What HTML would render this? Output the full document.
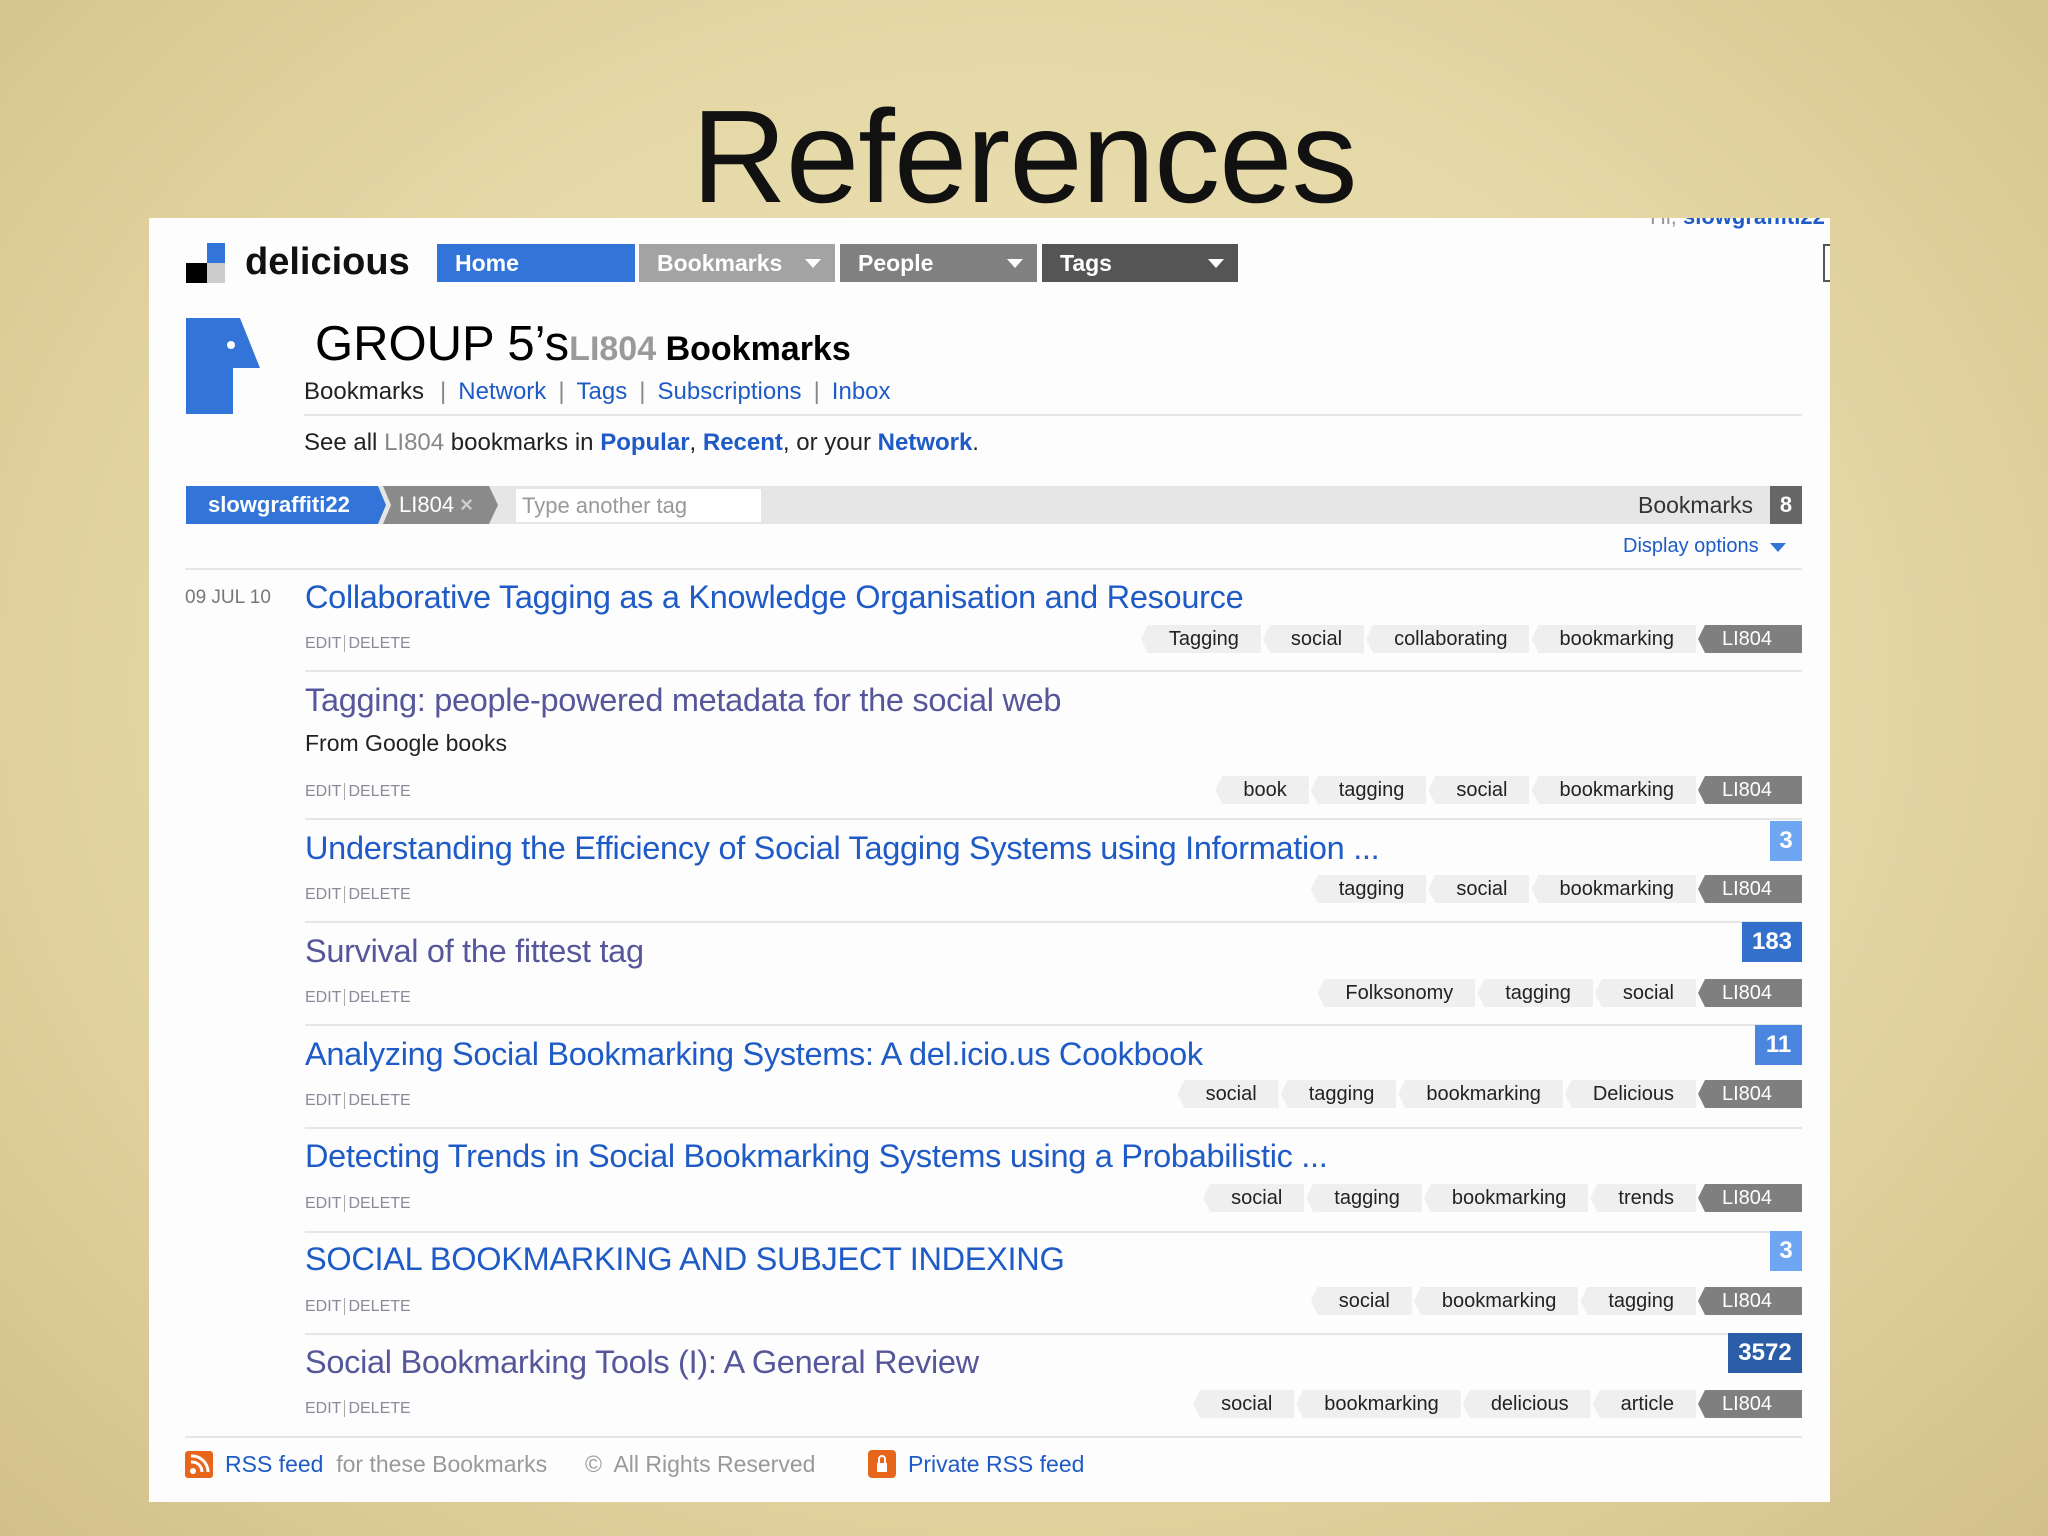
<!DOCTYPE html>
<html><head><meta charset="utf-8">
<style>
*{margin:0;padding:0;box-sizing:border-box}
html,body{width:2048px;height:1536px;overflow:hidden}
body{position:relative;font-family:"Liberation Sans",Arial,sans-serif;
background:radial-gradient(ellipse at 50% 45%,#efe5bd 0%,#e5d8a6 55%,#d3c08a 100%);}
.a{position:absolute;white-space:nowrap}
#title{left:0;width:2048px;text-align:center;top:82px;font-size:132px;line-height:150px;color:#111;letter-spacing:-1px}
#panel{left:149px;top:218px;width:1681px;height:1284px;background:#fdfdfd}
.tab{position:absolute;top:244px;height:38px;color:#fff;font-weight:bold;font-size:23px;line-height:38px;padding-left:18px}
.tri{position:absolute;right:14px;top:15px;width:0;height:0;border-left:8px solid transparent;border-right:8px solid transparent;border-top:9px solid #fff}
.blue{color:#1f5bc6}
.vis{color:#56579a}
.t{font-size:32.5px;line-height:36px;letter-spacing:-0.3px}
.ed{font-size:16px;color:#8a8a99;line-height:20px}
.ed b{font-weight:normal;border-left:1px solid #aaa;margin:0 3px;}
.tags{position:absolute;right:246px;display:flex;height:28px}
.tags span{display:block;background:#efefef;color:#222;font-size:20px;line-height:28px;padding:0 22px 0 28px;margin-left:2px;clip-path:polygon(7px 0,100% 0,100% 100%,7px 100%,0 50%)}
.tags span.l{background:#7f7f7f;color:#fff;width:104px;padding:0 0 0 24px}
.hr{position:absolute;height:2px;background:#e6e6e6}
.cnt{position:absolute;right:246px;height:40px;color:#fff;font-weight:bold;font-size:24px;line-height:40px;text-align:center}
.sep{color:#888;margin:0 12px}
</style></head><body>
<div class="a" id="title">References</div>
<div class="a" id="panel"></div>
<div class="a" style="left:1650px;top:218px;width:180px;height:14px;overflow:hidden"><div style="margin-top:-14px;font-size:22px;font-weight:bold;color:#1f5bc6"><span style="color:#999;font-weight:normal">Hi, </span>slowgraffiti22</div></div>
<div class="a" style="left:1823px;top:244px;width:7px;height:38px;border:2px solid #555;border-right:none"></div>

<div class="a" style="left:186px;top:263px;width:21px;height:20px;background:#000"></div>
<div class="a" style="left:207px;top:243px;width:18px;height:20px;background:#3274d8"></div>
<div class="a" style="left:207px;top:263px;width:18px;height:20px;background:#ccc"></div>
<div class="a" style="left:245px;top:240px;font-size:38px;font-weight:bold;color:#111;line-height:44px;letter-spacing:0px">delicious</div>

<div class="tab" style="left:437px;width:198px;background:#3274d8">Home</div>
<div class="tab" style="left:639px;width:196px;background:#a3a3a3">Bookmarks<i class="tri"></i></div>
<div class="tab" style="left:840px;width:197px;background:#808080">People<i class="tri"></i></div>
<div class="tab" style="left:1042px;width:196px;background:#555">Tags<i class="tri"></i></div>

<svg class="a" style="left:186px;top:318px" width="74" height="96"><polygon points="0,0 54,0 74,50 47,50 47,96 0,96" fill="#3274d8"/><circle cx="45" cy="27" r="4" fill="#fff"/></svg>

<div class="a" style="left:315px;top:316px;font-size:49px;line-height:56px;color:#000">GROUP 5’s<span style="font-size:34px;font-weight:bold;color:#9a9a9a">LI804 </span><span style="font-size:34px;font-weight:bold">Bookmarks</span></div>
<div class="a" style="left:304px;top:377px;font-size:24px;line-height:30px;color:#222">Bookmarks<span class="sep" style="margin-left:16px">|</span><span class="blue">Network</span><span class="sep">|</span><span class="blue">Tags</span><span class="sep">|</span><span class="blue">Subscriptions</span><span class="sep">|</span><span class="blue">Inbox</span></div>
<div class="hr" style="left:304px;top:414px;width:1498px"></div>
<div class="a" style="left:304px;top:428px;font-size:24px;line-height:30px;color:#222">See all <span style="color:#888">LI804</span> bookmarks in <b class="blue">Popular</b>, <b class="blue">Recent</b>, or your <b class="blue">Network</b>.</div>

<div class="a" style="left:186px;top:486px;width:1616px;height:38px;background:#e6e6e6"></div>
<div class="a" style="left:186px;top:486px;width:200px;height:38px;background:#3274d8;clip-path:polygon(0 0,192px 0,200px 50%,192px 100%,0 100%);color:#fff;font-weight:bold;font-size:22px;line-height:38px;padding-left:22px">slowgraffiti22</div>
<div class="a" style="left:383px;top:486px;width:115px;height:38px;background:#8a8a8a;clip-path:polygon(0 0,106px 0,115px 50%,106px 100%,0 100%,8px 50%);color:#fff;font-size:22px;line-height:38px;padding-left:16px">LI804 <span style="color:#ccc;font-weight:bold">×</span></div>
<div class="a" style="left:516px;top:489px;width:245px;height:33px;background:#fff;color:#999;font-size:22px;line-height:33px;padding-left:6px">Type another tag</div>
<div class="a" style="left:1638px;top:486px;font-size:23px;line-height:38px;color:#333">Bookmarks</div>
<div class="a" style="left:1770px;top:486px;width:32px;height:38px;background:#666;color:#fff;font-size:22px;font-weight:bold;line-height:38px;text-align:center">8</div>
<div class="a blue" style="left:1623px;top:533px;font-size:20px;line-height:26px">Display options <span style="display:inline-block;width:0;height:0;border-left:8px solid transparent;border-right:8px solid transparent;border-top:9px solid #3274d8;margin-left:6px"></span></div>
<div class="hr" style="left:185px;top:568px;width:1617px"></div>

<div class="a" style="left:185px;top:587px;font-size:19px;color:#777;line-height:22px">09 JUL 10</div>
<div class="a t blue" style="left:305px;top:579px">Collaborative Tagging as a Knowledge Organisation and Resource</div>
<div class="a ed" style="left:305px;top:634px">EDIT<b></b>DELETE</div>
<div class="tags" style="top:625px"><span>Tagging</span><span>social</span><span>collaborating</span><span>bookmarking</span><span class="l">LI804</span></div>
<div class="hr" style="left:305px;top:670px;width:1497px"></div>

<div class="a t vis" style="left:305px;top:682px">Tagging: people-powered metadata for the social web</div>
<div class="a" style="left:305px;top:730px;font-size:23px;color:#222;line-height:26px">From Google books</div>
<div class="a ed" style="left:305px;top:782px">EDIT<b></b>DELETE</div>
<div class="tags" style="top:776px"><span>book</span><span>tagging</span><span>social</span><span>bookmarking</span><span class="l">LI804</span></div>
<div class="hr" style="left:305px;top:818px;width:1497px"></div>

<div class="cnt" style="top:821px;width:32px;background:#6fa6f2">3</div>
<div class="a t blue" style="left:305px;top:830px">Understanding the Efficiency of Social Tagging Systems using Information ...</div>
<div class="a ed" style="left:305px;top:885px">EDIT<b></b>DELETE</div>
<div class="tags" style="top:875px"><span>tagging</span><span>social</span><span>bookmarking</span><span class="l">LI804</span></div>
<div class="hr" style="left:305px;top:921px;width:1497px"></div>

<div class="cnt" style="top:922px;width:60px;background:#3370cc">183</div>
<div class="a t vis" style="left:305px;top:933px">Survival of the fittest tag</div>
<div class="a ed" style="left:305px;top:988px">EDIT<b></b>DELETE</div>
<div class="tags" style="top:979px"><span>Folksonomy</span><span>tagging</span><span>social</span><span class="l">LI804</span></div>
<div class="hr" style="left:305px;top:1024px;width:1497px"></div>

<div class="cnt" style="top:1025px;width:47px;background:#4a86e0">11</div>
<div class="a t blue" style="left:305px;top:1036px">Analyzing Social Bookmarking Systems: A del.icio.us Cookbook</div>
<div class="a ed" style="left:305px;top:1091px">EDIT<b></b>DELETE</div>
<div class="tags" style="top:1080px"><span>social</span><span>tagging</span><span>bookmarking</span><span>Delicious</span><span class="l">LI804</span></div>
<div class="hr" style="left:305px;top:1127px;width:1497px"></div>

<div class="a t blue" style="left:305px;top:1138px">Detecting Trends in Social Bookmarking Systems using a Probabilistic ...</div>
<div class="a ed" style="left:305px;top:1194px">EDIT<b></b>DELETE</div>
<div class="tags" style="top:1184px"><span>social</span><span>tagging</span><span>bookmarking</span><span>trends</span><span class="l">LI804</span></div>
<div class="hr" style="left:305px;top:1231px;width:1497px"></div>

<div class="cnt" style="top:1231px;width:32px;background:#6fa6f2">3</div>
<div class="a t blue" style="left:305px;top:1241px">SOCIAL BOOKMARKING AND SUBJECT INDEXING</div>
<div class="a ed" style="left:305px;top:1297px">EDIT<b></b>DELETE</div>
<div class="tags" style="top:1287px"><span>social</span><span>bookmarking</span><span>tagging</span><span class="l">LI804</span></div>
<div class="hr" style="left:305px;top:1333px;width:1497px"></div>

<div class="cnt" style="top:1333px;width:74px;background:#2c5ea8">3572</div>
<div class="a t vis" style="left:305px;top:1344px">Social Bookmarking Tools (I): A General Review</div>
<div class="a ed" style="left:305px;top:1399px">EDIT<b></b>DELETE</div>
<div class="tags" style="top:1390px"><span>social</span><span>bookmarking</span><span>delicious</span><span>article</span><span class="l">LI804</span></div>
<div class="hr" style="left:185px;top:1436px;width:1617px"></div>

<svg class="a" style="left:185px;top:1451px" width="28" height="27"><rect width="28" height="27" rx="3" fill="#e8661c"/><circle cx="8" cy="20" r="3" fill="#fff"/><path d="M6 11a10 10 0 0 1 11 10M6 5a16 16 0 0 1 17 16" stroke="#fff" stroke-width="3" fill="none"/></svg>
<div class="a" style="left:225px;top:1450px;font-size:23px;line-height:28px"><span class="blue">RSS feed</span> <span style="color:#999">&nbsp;for these Bookmarks</span></div>
<div class="a" style="left:585px;top:1450px;font-size:23px;line-height:28px;color:#999">©&nbsp; All Rights Reserved</div>
<svg class="a" style="left:868px;top:1450px" width="28" height="28"><rect width="28" height="28" rx="4" fill="#e8661c"/><rect x="9" y="13" width="10" height="9" fill="#fff"/><path d="M11 13v-4a3 3 0 0 1 6 0v4" stroke="#fff" stroke-width="2" fill="none"/></svg>
<div class="a blue" style="left:908px;top:1450px;font-size:23px;line-height:28px">Private RSS feed</div>
</body></html>
